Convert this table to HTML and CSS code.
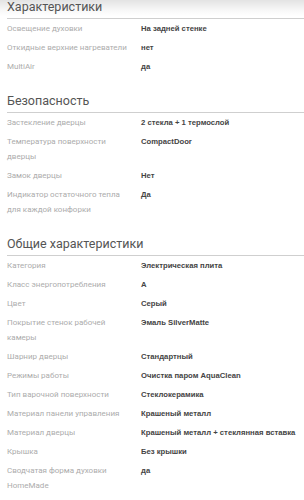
FILE: index.html
```html
<!DOCTYPE html>
<html lang="ru">
<head>
<meta charset="utf-8">
<link rel="stylesheet" href="styles.css">
</head>
<body>
<section class="group first">
  <h2 class="group-title">Характеристики</h2>
  <dl class="specs">
    <dt>Освещение духовки</dt><dd>На задней стенке</dd>
    <dt>Откидные верхние нагреватели</dt><dd>нет</dd>
    <dt>MultiAir</dt><dd>да</dd>
  </dl>
</section>
<section class="group">
  <h2 class="group-title">Безопасность</h2>
  <dl class="specs">
    <dt>Застекление дверцы</dt><dd>2 стекла + 1 термослой</dd>
    <dt>Температура поверхности дверцы</dt><dd>CompactDoor</dd>
    <dt>Замок дверцы</dt><dd>Нет</dd>
    <dt>Индикатор остаточного тепла для каждой конфорки</dt><dd>Да</dd>
  </dl>
</section>
<section class="group">
  <h2 class="group-title">Общие характеристики</h2>
  <dl class="specs">
    <dt>Категория</dt><dd>Электрическая плита</dd>
    <dt>Класс энергопотребления</dt><dd>A</dd>
    <dt>Цвет</dt><dd>Серый</dd>
    <dt>Покрытие стенок рабочей камеры</dt><dd>Эмаль SilverMatte</dd>
    <dt>Шарнир дверцы</dt><dd>Стандартный</dd>
    <dt>Режимы работы</dt><dd>Очистка паром AquaClean</dd>
    <dt>Тип варочной поверхности</dt><dd>Стеклокерамика</dd>
    <dt>Материал панели управления</dt><dd>Крашеный металл</dd>
    <dt>Материал дверцы</dt><dd>Крашеный металл + стеклянная вставка</dd>
    <dt>Крышка</dt><dd>Без крышки</dd>
    <dt>Сводчатая форма духовки HomeMade</dt><dd>да</dd>
  </dl>
</section>
</body>
</html>
```
FILE: styles.css
```css
html, body {
  margin: 0;
  padding: 0;
}
body {
  width: 304px;
  height: 500px;
  overflow: hidden;
  background: linear-gradient(#e3e3e3 0, #f7f7f7 10px, #ffffff 16px) no-repeat;
  background-size: 100% 18px;
  background-color: #fff;
  font-family: Roboto, "Liberation Sans", sans-serif;
}
.group {
  padding-left: 7px;
  margin-top: 18px;
}
.group.first {
  margin-top: 0;
}
.group-title {
  margin: 0;
  font-size: 12.5px;
  line-height: 14px;
  font-weight: 400;
  color: #555555;
  padding-bottom: 4px;
  border-bottom: 1px solid #cfcfcf;
}
.specs {
  margin: 0;
  display: grid;
  grid-template-columns: 127px 1fr;
  column-gap: 7px;
}
.specs dt,
.specs dd {
  margin: 0;
  padding: 2px 0;
  line-height: 15px;
}
.specs dt {
  font-size: 8px;
  color: #acacac;
  font-weight: 400;
}
.specs dd {
  font-size: 7.7px;
  color: #444444;
  font-weight: 700;
  font-family: "Liberation Sans", Arial, sans-serif;
}
```
